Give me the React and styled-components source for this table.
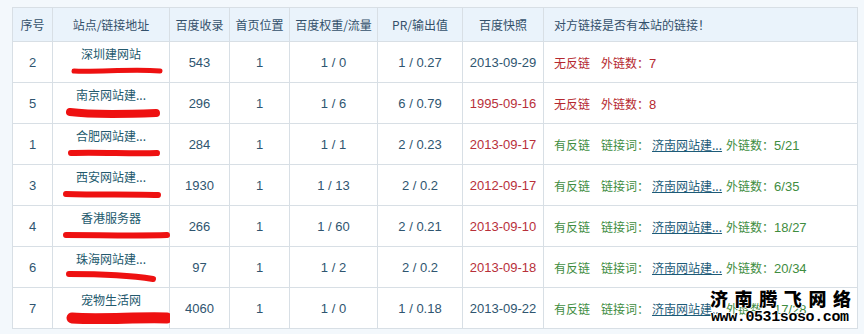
import React from "react";
import styled, { createGlobalStyle } from "styled-components";

const GlobalStyle = createGlobalStyle`
  html, body {
    margin: 0;
    padding: 0;
    background: #f3f8fc;
  }
`

const Page = styled.div`
  position: relative;
  width: 864px;
  height: 334px;
  padding: 7px 0 0 12px;
  box-sizing: border-box;
  background: #f3f8fc;
  font-family: "Liberation Sans", "Noto Sans CJK SC", sans-serif;
  overflow: hidden;
`

const Table = styled.table`
  width: 845px;
  table-layout: fixed;
  border-collapse: collapse;
  background: #fff;
`

const Th = styled.th`
  height: 33px;
  padding: 0;
  border: 1px solid #d8dfe5;
  background: #eaf3fb;
  color: #33506a;
  font-size: 12px;
  font-weight: normal;
  font-family: "Noto Sans CJK SC", "Liberation Sans", sans-serif;
  text-align: ${p => (p.$left ? "left" : "center")};
  padding-left: ${p => (p.$left ? "10px" : "0")};
  white-space: nowrap;
`

const Td = styled.td`
  height: 40px;
  padding: 0;
  border: 1px solid #d8dfe5;
  text-align: center;
  vertical-align: middle;
  color: ${p => p.$color || "#2f5570"};
  font-size: 13px;
  white-space: nowrap;
`

const SiteTd = styled(Td)`
  vertical-align: top;
`

const SiteName = styled.div`
  padding-top: 3px;
  font-family: "Noto Sans CJK SC", sans-serif;
  font-size: 12px;
  line-height: 17px;
  color: #23596d;
`

const Scribble = styled.svg`
  display: block;
`

const LinkTd = styled(Td)`
  text-align: left;
  padding-left: 10px;
  font-family: "Noto Sans CJK SC", "Liberation Sans", sans-serif;
  font-size: 12px;
`

const Part = styled.span`
  color: ${p => (p.$bad ? "#b5282f" : "#3f8d3f")};
  margin-right: ${p => p.$gap || 0}px;
`

const Num = styled.span`
  font-family: "Liberation Sans", sans-serif;
  font-size: 13px;
`

const Keyword = styled.a`
  color: #1d5b78;
  text-decoration: underline;
  margin-right: 4px;
`

const Watermark = styled.div`
  position: absolute;
  left: 707px;
  top: 287px;
  color: #000;
  text-shadow: 1px 0 #fff, -1px 0 #fff, 0 1px #fff, 0 -1px #fff;
`

const MarkTitle = styled.div`
  font-family: "Noto Sans CJK SC", sans-serif;
  font-weight: 900;
  font-size: 18px;
  line-height: 22px;
  letter-spacing: 6.6px;
  padding-left: 3px;
`

const MarkUrl = styled.div`
  font-family: "Liberation Mono", monospace;
  font-weight: bold;
  font-size: 15px;
  line-height: 18px;
  letter-spacing: -0.4px;
  padding-left: 4px;
`

const scribbles = {
  a: { d: "M21 9 C45 10, 80 7, 107 9", w: 5 },
  b: { d: "M17 9 C40 12, 75 11, 103 10", w: 8 },
  c: { d: "M18 9 C45 8, 80 10, 104 9", w: 6 },
  d: { d: "M13 9 C45 10, 80 9, 105 10", w: 6 },
  e: { d: "M13 9 C45 9, 85 10, 114 9", w: 6 },
  f: { d: "M16 7 C40 7, 75 8, 100 12", w: 6 },
  g: { d: "M19 10 C45 12, 85 9, 114 10", w: 11 }
}

const rows = [
  { no: 2, site: "深圳建网站", s: "a", count: 543, pos: 1, weight: "1 / 0", pr: "1 / 0.27", date: "2013-09-29", old: false, has: false, out: "7" },
  { no: 5, site: "南京网站建...", s: "b", count: 296, pos: 1, weight: "1 / 6", pr: "6 / 0.79", date: "1995-09-16", old: true, has: false, out: "8" },
  { no: 1, site: "合肥网站建...", s: "c", count: 284, pos: 1, weight: "1 / 1", pr: "2 / 0.23", date: "2013-09-17", old: true, has: true, out: "5/21" },
  { no: 3, site: "西安网站建...", s: "d", count: 1930, pos: 1, weight: "1 / 13", pr: "2 / 0.2", date: "2012-09-17", old: true, has: true, out: "6/35" },
  { no: 4, site: "香港服务器", s: "e", count: 266, pos: 1, weight: "1 / 60", pr: "2 / 0.21", date: "2013-09-10", old: true, has: true, out: "18/27" },
  { no: 6, site: "珠海网站建...", s: "f", count: 97, pos: 1, weight: "1 / 2", pr: "2 / 0.2", date: "2013-09-18", old: true, has: true, out: "20/34" },
  { no: 7, site: "宠物生活网", s: "g", count: 4060, pos: 1, weight: "1 / 0", pr: "1 / 0.18", date: "2013-09-22", old: false, has: true, out: "17/28" }
]

const widths = [40, 117, 60, 60, 88, 85, 81, 314]

export default function App() {
  return (
    <Page>
      <GlobalStyle />
      <Table>
        <colgroup>
          {widths.map((w, i) => <col key={i} style={{ width: w }} />)}
        </colgroup>
        <thead>
          <tr>
            <Th>序号</Th>
            <Th>站点/链接地址</Th>
            <Th>百度收录</Th>
            <Th>首页位置</Th>
            <Th>百度权重/流量</Th>
            <Th>PR/输出值</Th>
            <Th>百度快照</Th>
            <Th $left>对方链接是否有本站的链接！</Th>
          </tr>
        </thead>
        <tbody>
          {rows.map(r => (
            <tr key={r.no}>
              <Td>{r.no}</Td>
              <SiteTd>
                <SiteName>{r.site}</SiteName>
                <Scribble width="117" height="16" viewBox="0 0 117 16">
                  <path d={scribbles[r.s].d} stroke="#ee1111" strokeWidth={scribbles[r.s].w} strokeLinecap="round" fill="none" />
                </Scribble>
              </SiteTd>
              <Td>{r.count}</Td>
              <Td>{r.pos}</Td>
              <Td>{r.weight}</Td>
              <Td>{r.pr}</Td>
              <Td $color={r.old ? "#b8303a" : "#2f5570"}>{r.date}</Td>
              <LinkTd>
                {r.has ? (
                  <>
                    <Part $gap={11}>有反链</Part>
                    <Part $gap={3}>链接词：</Part>
                    <Keyword href="#">济南网站建...</Keyword>
                    <Part>外链数：<Num>{r.out}</Num></Part>
                  </>
                ) : (
                  <>
                    <Part $bad $gap={11}>无反链</Part>
                    <Part $bad>外链数：<Num>{r.out}</Num></Part>
                  </>
                )}
              </LinkTd>
            </tr>
          ))}
        </tbody>
      </Table>
      <Watermark>
        <MarkTitle>济南腾飞网络</MarkTitle>
        <MarkUrl>www.0531soso.com</MarkUrl>
      </Watermark>
    </Page>
  )
}
